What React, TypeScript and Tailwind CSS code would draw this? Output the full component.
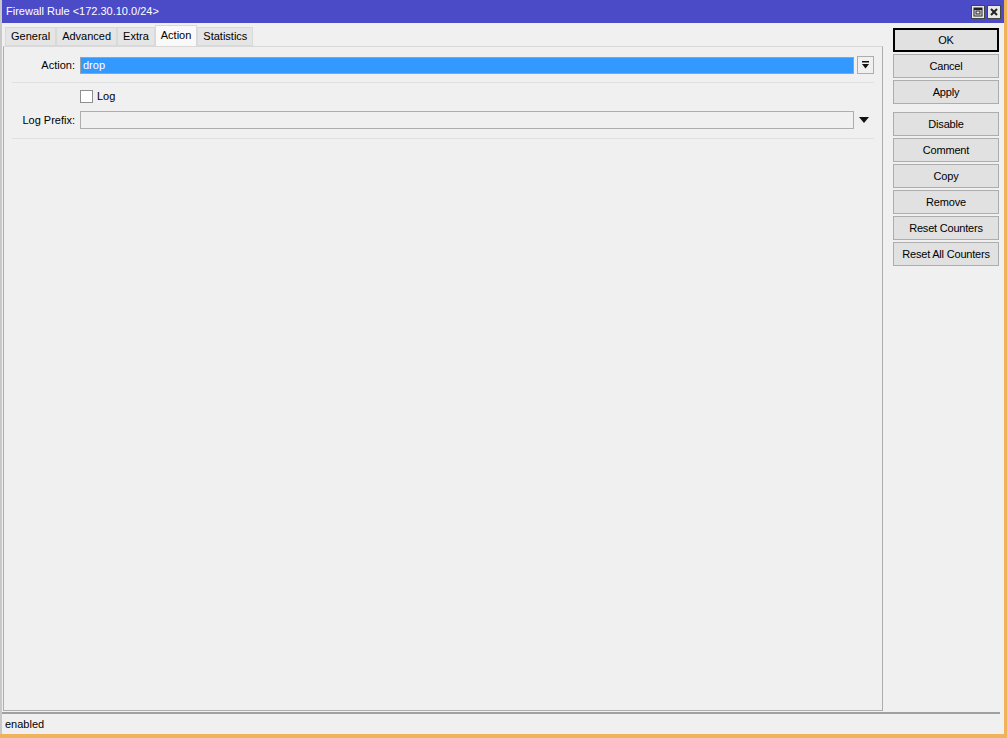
import React from "react";

const tabs = ["General", "Advanced", "Extra", "Action", "Statistics"];
const buttonsTop = ["Cancel", "Apply"];
const buttonsBottom = ["Disable", "Comment", "Copy", "Remove", "Reset Counters", "Reset All Counters"];

function SideButton({ label, primary }: { label: string; primary?: boolean }) {
  return (
    <button
      className={
        "h-[24px] w-[106px] bg-[#e1e1e1] text-[11px] tracking-[-0.2px] text-black " +
        (primary ? "border-2 border-black" : "border border-[#adadad]")
      }
    >
      {label}
    </button>
  );
}

export default function App() {
  const active = "Action";

  return (
    <div className="flex h-[738px] w-[1007px] flex-col bg-[#f0f0f0] font-['Liberation_Sans',Arial,sans-serif] text-[11px] text-black">
      <div className="flex flex-1 min-h-0">
        <div className="flex flex-1 flex-col border-l-2 border-[#c8c8c8]">
          {/* title bar */}
          <div className="flex h-[23px] items-center justify-between bg-[#4b4bc8] pl-[4px] pr-[3px] text-white">
            <span className="text-[11px]">Firewall Rule &lt;172.30.10.0/24&gt;</span>
            <div className="flex gap-[2px]">
              <div className="flex h-[14px] w-[14px] items-center justify-center border border-[#444] bg-[#e9e9e9]">
                <svg width="10" height="10" viewBox="0 0 10 10">
                  <rect x="1" y="1" width="8" height="8" fill="none" stroke="#222" />
                  <rect x="3" y="4" width="4" height="3" fill="none" stroke="#222" />
                  <rect x="1" y="1" width="8" height="2" fill="#222" />
                </svg>
              </div>
              <div className="flex h-[14px] w-[14px] items-center justify-center border border-[#444] bg-[#e9e9e9]">
                <svg width="10" height="10" viewBox="0 0 10 10">
                  <path d="M2 2 L8 8 M8 2 L2 8" stroke="#222" strokeWidth="2" />
                </svg>
              </div>
            </div>
          </div>

          <div className="flex flex-1 min-h-0">
            {/* left: tabs + form */}
            <div className="flex flex-1 flex-col pl-[1px]">
              <div className="flex h-[23px] items-end pl-[2px]">
                {tabs.map((t) => (
                  <div
                    key={t}
                    className={
                      "flex items-center border border-[#d9d9d9] px-[5px] " +
                      (t === active
                        ? "-mb-px h-[22px] border-b-0 bg-[#f9f9f9] pb-[3px]"
                        : "h-[19px] bg-[#e5e5e5]")
                    }
                  >
                    {t}
                  </div>
                ))}
              </div>
              <div className="flex flex-1 flex-col border border-[#adadad] border-t-[#d9d9d9] bg-[#f0f0f0] pt-[9px]">
                {/* Action */}
                <div className="flex h-[18px] items-center pr-[8px]">
                  <span className="w-[71px] text-right">Action:</span>
                  <div className="ml-[5px] flex h-[17px] flex-1 items-center border border-[#a0a0a0] bg-[#3399ff] px-[2px] text-white">
                    drop
                  </div>
                  <div className="ml-[3px] flex h-[18px] w-[17px] items-center justify-center border border-[#adadad] bg-[#f0f0f0]">
                    <svg width="9" height="9" viewBox="0 0 9 9">
                      <rect x="1" y="0" width="7" height="1.5" fill="#111" />
                      <path d="M1 3 H8 L4.5 7.5 Z" fill="#111" />
                    </svg>
                  </div>
                </div>
                <div className="mx-[8px] mt-[8px] border-t border-[#e0e0e0]" />

                {/* Log */}
                <div className="mt-[7px] flex h-[13px] items-center">
                  <div className="ml-[76px] h-[13px] w-[13px] border border-[#8f8f8f] bg-white" />
                  <span className="ml-[4px]">Log</span>
                </div>

                {/* Log Prefix */}
                <div className="mt-[8px] flex h-[18px] items-center pr-[8px]">
                  <span className="w-[71px] text-right">Log Prefix:</span>
                  <div className="ml-[5px] h-[18px] flex-1 border border-[#adadad] bg-[#f0f0f0]" />
                  <div className="flex w-[20px] items-center justify-center">
                    <svg width="10" height="6" viewBox="0 0 10 6">
                      <path d="M0 0 H10 L5 6 Z" fill="#111" />
                    </svg>
                  </div>
                </div>
                <div className="mx-[8px] mt-[9px] border-t border-[#e0e0e0]" />
              </div>
            </div>

            {/* right: action buttons */}
            <div className="flex w-[121px] flex-col pt-[5px] pl-[10px]">
              <div className="flex flex-col gap-[2px]">
                <SideButton label="OK" primary />
                {buttonsTop.map((b) => (
                  <SideButton key={b} label={b} />
                ))}
              </div>
              <div className="mt-[8px] flex flex-col gap-[2px]">
                {buttonsBottom.map((b) => (
                  <SideButton key={b} label={b} />
                ))}
              </div>
            </div>
          </div>

          {/* status bar */}
          <div className="mt-[1px] mr-[4px] flex h-[22px] items-center border-t-2 border-[#a0a0a0] pl-[3px]">
            enabled
          </div>
        </div>
        <div className="w-[3px] bg-[#f0b25a]" />
      </div>
      <div className="h-[4px] bg-[#f0b25a]" />
    </div>
  );
}
